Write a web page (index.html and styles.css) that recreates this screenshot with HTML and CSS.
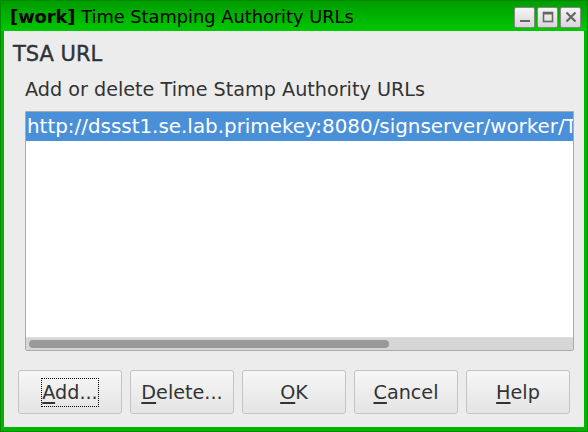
FILE: index.html
```html
<!DOCTYPE html>
<html>
<head>
<meta charset="utf-8">
<link rel="stylesheet" href="styles.css">
</head>
<body>
<div class="window">
  <div class="titlebar">
    <div class="title"><b>[work]</b> Time Stamping Authority URLs</div>
    <div class="wbtns">
      <div class="wbtn"><svg width="12" height="12" viewBox="0 0 12 12"><rect x="1" y="9" width="10" height="2" fill="#666"/></svg></div>
      <div class="wbtn"><svg width="12" height="12" viewBox="0 0 12 12"><rect x="1.5" y="1.5" width="9" height="9" fill="none" stroke="#666" stroke-width="1.6"/><rect x="1" y="1" width="10" height="2.5" fill="#666"/></svg></div>
      <div class="wbtn"><svg width="12" height="12" viewBox="0 0 12 12"><path d="M1.5 1.5 L10.5 10.5 M10.5 1.5 L1.5 10.5" stroke="#666" stroke-width="2.2"/></svg></div>
    </div>
  </div>
  <div class="content">
    <div class="heading">TSA URL</div>
    <div class="group">
      <div class="label">Add or delete Time Stamp Authority URLs</div>
      <div class="list">
        <div class="rows">
          <div class="row sel">http://dssst1.se.lab.primekey:8080/signserver/worker/TimeStampSigner</div>
        </div>
        <div class="hscroll"><div class="thumb"></div></div>
      </div>
    </div>
    <div class="buttons">
      <div class="btn"><span class="focus"><u>A</u>dd...</span></div>
      <div class="btn"><span><u>D</u>elete...</span></div>
      <div class="btn"><span><u>O</u>K</span></div>
      <div class="btn"><span><u>C</u>ancel</span></div>
      <div class="btn"><span><u>H</u>elp</span></div>
    </div>
  </div>
</div>
</body>
</html>
```
FILE: styles.css
```css
html, body {
  margin: 0;
  padding: 0;
  width: 588px;
  height: 432px;
  overflow: hidden;
  font-family: "DejaVu Sans", sans-serif;
}
.window {
  box-sizing: border-box;
  width: 588px;
  height: 432px;
  border: 1px solid #008a00;
  background: #00b400;
  display: flex;
  flex-direction: column;
  padding: 0 3px 4px 3px;
}
.titlebar {
  height: 30px;
  display: flex;
  align-items: center;
  justify-content: space-between;
  background: linear-gradient(#009c00, #00c800);
  margin: 0 -3px;
  padding: 0 6px 0 9px;
  flex: none;
}
.title {
  font-size: 17.8px;
  color: #000;
  white-space: nowrap;
  padding-top: 1px;
}
.title b { font-weight: bold; }
.wbtns {
  display: flex;
  gap: 2px;
  padding-top: 2px;
}
.wbtn {
  width: 19px;
  height: 19px;
  border: 1px solid #888;
  border-radius: 2px;
  background: linear-gradient(#f4f4f4, #d8d8d8);
  display: flex;
  align-items: center;
  justify-content: center;
}
.content {
  flex: 1;
  background: #ececec;
  display: flex;
  flex-direction: column;
  padding: 0 10px 0 9px;
  color: #333;
}
.heading {
  font-size: 21px;
  color: #303336;
  margin-top: 11px;
  height: 25px;
  line-height: 25px;
  -webkit-text-stroke: 0.4px #303336;
}
.group {
  padding-left: 12px;
  padding-right: 0;
}
.label {
  font-size: 19.2px;
  color: #333;
  margin-top: 11px;
  height: 24px;
  line-height: 24px;
}
.list {
  margin-top: 9px;
  height: 240px;
  box-sizing: border-box;
  border: 1px solid #aaa;
  border-radius: 0 0 2px 2px;
  background: #fff;
  display: flex;
  flex-direction: column;
  overflow: hidden;
}
.rows {
  flex: 1;
  overflow: hidden;
}
.row {
  height: 29px;
  line-height: 29px;
  font-size: 19.9px;
  white-space: nowrap;
  padding-left: 1px;
}
.row.sel {
  background: #4a90d9;
  color: #fff;
}
.hscroll {
  height: 12px;
  background: #d6d6d6;
  border-top: 1px solid #dedede;
  display: flex;
  align-items: center;
  padding-left: 3px;
  flex: none;
}
.thumb {
  width: 360px;
  height: 8px;
  border-radius: 4px;
  background: #999;
}
.buttons {
  display: flex;
  gap: 8px;
  margin-top: 19px;
  padding-left: 5px;
}
.btn {
  width: 102px;
  height: 42px;
  border: 1px solid #c4c4c4;
  border-radius: 3px;
  background: linear-gradient(#f6f6f6, #e4e4e4);
  display: flex;
  align-items: center;
  justify-content: center;
  font-size: 19.2px;
  color: #333;
}
.btn span {
  padding: 0 1px;
  line-height: 29px;
}
.btn .focus {
  outline: 1px dotted #000;
  outline-offset: -1px;
}
.btn u {
  text-decoration-thickness: 2px;
  text-underline-offset: 3px;
}
```
